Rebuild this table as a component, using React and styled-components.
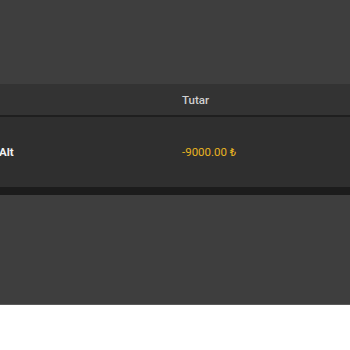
import styled, { createGlobalStyle } from 'styled-components';

const GlobalStyle = createGlobalStyle`
    html, body {
        margin: 0;
        padding: 0;
        background: #ffffff;
    }
    body {
        font-family: Roboto, 'Liberation Sans', sans-serif;
    }
`;

export default function App() {
    return (
        <>
            <GlobalStyle />
            <Page>
                <Table>
                    <HeaderRow>
                        <Cell />
                        <HeadCell>Tutar</HeadCell>
                    </HeaderRow>
                    <BodyRow>
                        <LabelCell>Alt</LabelCell>
                        <AmountCell>-9000.00 ₺</AmountCell>
                    </BodyRow>
                    <Footer />
                </Table>
            </Page>
        </>
    );
}

const Page = styled.main`
    height: 305px;
    box-sizing: border-box;
    padding-top: 84px;
    background-color: #3e3e3e;
    border-bottom: 1px solid #5a5a5a;
`;

const Table = styled.section`
    display: flex;
    flex-direction: column;
`;

const HeaderRow = styled.div`
    height: 31px;
    display: grid;
    grid-template-columns: 182px 1fr;
    align-items: center;
    background-color: #333333;
    border-bottom: 2px solid #1f1f1f;
`;

const BodyRow = styled.div`
    height: 70px;
    display: grid;
    grid-template-columns: 182px 1fr;
    align-items: center;
    background-color: #2f2f2f;
`;

const Footer = styled.div`
    height: 8px;
    background-color: #1c1c1c;
`;

const Cell = styled.div`
    font-size: 11.5px;
`;

const HeadCell = styled(Cell)`
    color: #d0d0d0;
    font-weight: 500;
`;

const LabelCell = styled(Cell)`
    color: #f2f2f2;
    font-weight: 700;
    margin-left: -1px;
`;

const AmountCell = styled(Cell)`
    color: #e8b422;
    font-weight: 400;
`;
